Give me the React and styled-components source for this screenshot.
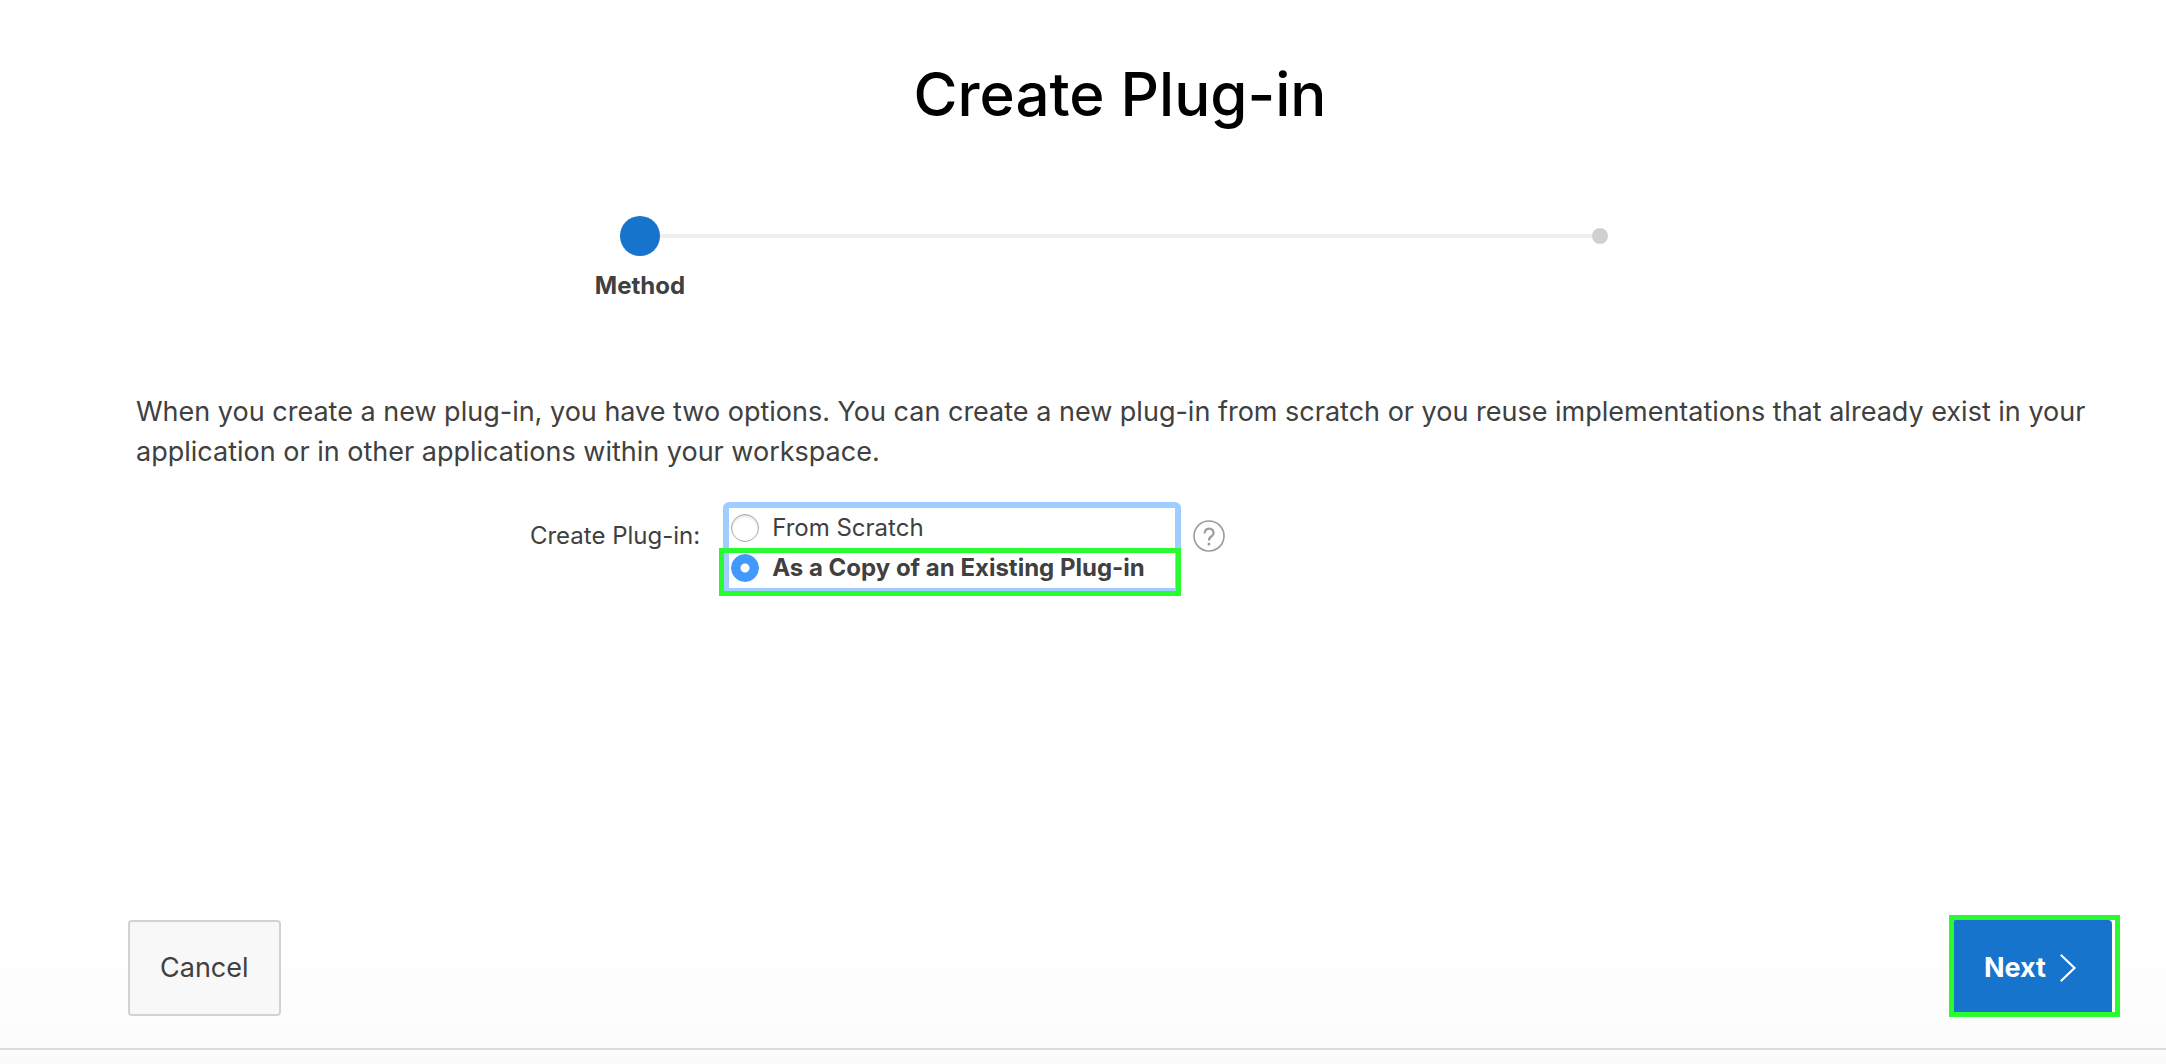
import React, { useState } from 'react';
import styled, { createGlobalStyle } from 'styled-components';

const GlobalStyle = createGlobalStyle`
  *, *::before, *::after { box-sizing: border-box; }
  body {
    margin: 0;
    background: #fff;
    color: #404040;
    font-family: Inter, "Liberation Sans", sans-serif;
    font-size: 24px;
    line-height: 32px;
  }
  button, input { font: inherit; color: inherit; }
`;

const Page = styled.div`
  display: flex;
  flex-direction: column;
  min-height: 100vh;
`;

const Main = styled.main`
  flex: 1;
  padding: 54px 54px 0 128px;
`;

const Title = styled.h1`
  margin: 0 0 82px;
  text-align: center;
  color: #000;
  font-size: 60px;
  font-weight: 500;
  line-height: 80px;
`;

const Steps = styled.ol`
  display: grid;
  grid-template-columns: 1fr 1fr;
  max-width: 1920px;
  margin: 0 auto 90px;
  padding: 0;
  list-style: none;
`;

const Step = styled.li`
  display: flex;
  flex-direction: column;
  align-items: center;
  gap: 14px;
  font-weight: 700;
`;

const Track = styled.div`
  display: flex;
  align-items: center;
  width: 100%;
  height: 40px;
`;

const Line = styled.span`
  flex: 1;
  height: 4px;
  background: ${(p) => (p.$on ? '#efefef' : 'transparent')};
`;

const Dot = styled.span`
  width: ${(p) => (p.$active ? 40 : 16)}px;
  height: ${(p) => (p.$active ? 40 : 16)}px;
  border-radius: 50%;
  background: ${(p) => (p.$active ? '#1674cd' : '#d0d0d0')};
`;

const Intro = styled.p`
  margin: 0 0 30px;
  padding: 0 8px;
  font-size: 27px;
  line-height: 40px;
`;

const Field = styled.div`
  display: grid;
  grid-template-columns: 30% auto auto 1fr;
  align-items: start;
`;

const FieldLabel = styled.span`
  padding: 18px 23px 0 0;
  text-align: right;
`;

const Options = styled.div`
  width: 458px;
  border: 6px solid #9fcdff;
  border-radius: 6px;
`;

const Option = styled.label`
  position: relative;
  display: flex;
  align-items: center;
  gap: 13px;
  height: 40px;
  padding-left: 2px;
  font-weight: ${(p) => (p.$marked ? 700 : 400)};
  white-space: nowrap;

  &::after {
    content: ${(p) => (p.$marked ? '""' : 'none')};
    position: absolute;
    inset: 0 -6px -8px -10px;
    border: 5px solid #28fb2f;
    pointer-events: none;
  }
`;

const Radio = styled.input`
  appearance: none;
  flex: none;
  width: 28px;
  height: 28px;
  margin: 0;
  border: 1px solid #a8a8a8;
  border-radius: 50%;
  background: #fff;
  box-shadow: inset 0 2px 2px #e4e4e4;
  outline: none;

  &:checked {
    border-color: #4099fb;
    background: radial-gradient(circle, #fff 0 3px, #fff 4px, #4099fb 5px);
    box-shadow: none;
  }
`;

const Help = styled.button`
  display: flex;
  margin: 18px 0 0 12px;
  padding: 0;
  border: 0;
  background: none;
  color: #9b9b9b;
`;

const Footer = styled.footer`
  display: flex;
  align-items: flex-start;
  justify-content: space-between;
  padding: 0 54px 32px 128px;
  border-bottom: 2px solid #dcdcdc;
  background: linear-gradient(#fff, #fcfcfc);
`;

const Strip = styled.div`
  height: 14px;
  background: #fbfbfb;
`;

const Button = styled.button`
  position: relative;
  display: flex;
  align-items: center;
  gap: 14px;
  height: 96px;
  padding: 0 30px;
  border: 2px solid ${(p) => (p.$primary ? '#1674cd' : '#d2d2d2')};
  border-radius: 4px;
  background: ${(p) => (p.$primary ? '#1674cd' : '#f8f8f8')};
  color: ${(p) => (p.$primary ? '#fff' : '#404040')};
  font-size: 27px;
  font-weight: ${(p) => (p.$primary ? 700 : 400)};

  &::after {
    content: ${(p) => (p.$primary ? '""' : 'none')};
    position: absolute;
    inset: -7px -10px -3px -5px;
    border: 5px solid #28fb2f;
  }
`;

const choices = [
  { value: 'scratch', text: 'From Scratch' },
  { value: 'copy', text: 'As a Copy of an Existing Plug-in' },
];

export default function App() {
  const [method, setMethod] = useState('copy');

  return (
    <Page>
      <GlobalStyle />
      <Main>
        <Title>Create Plug-in</Title>
        <Steps>
          <Step aria-current="step">
            <Track><Line /><Dot $active /><Line $on /></Track>
            Method
          </Step>
          <Step>
            <Track><Line $on /><Dot /><Line /></Track>
          </Step>
        </Steps>
        <Intro>
          When you create a new plug-in, you have two options. You can create a new plug-in from
          scratch or you reuse implementations that already exist in your application or in other
          applications within your workspace.
        </Intro>
        <Field>
          <FieldLabel id="method-label">Create Plug-in:</FieldLabel>
          <Options role="radiogroup" aria-labelledby="method-label">
            {choices.map((c) => (
              <Option key={c.value} $marked={method === c.value}>
                <Radio
                  type="radio"
                  name="method"
                  value={c.value}
                  checked={method === c.value}
                  onChange={() => setMethod(c.value)}
                />
                {c.text}
              </Option>
            ))}
          </Options>
          <Help type="button" aria-label="Help">
            <svg width="32" height="32" viewBox="0 0 32 32" fill="none" stroke="currentColor">
              <circle cx="16" cy="16" r="15" strokeWidth="1.6" />
              <path d="M11.6 13.400V13A4.500 4.200 0 1 1 18.600 16.300C17 17.300 16 18 16 20.500" strokeWidth="2.200" />
              <circle cx="16" cy="24" r="1.500" fill="currentColor" stroke="none" />
            </svg>
          </Help>
        </Field>
      </Main>
      <Footer>
        <Button type="button">Cancel</Button>
        <Button type="button" $primary>
          Next
          <svg width="20" height="28" viewBox="0 0 20 28" fill="none" stroke="currentColor" strokeWidth="2.200" strokeLinecap="round">
            <path d="M1.500 1.500L14.500 14L1.500 26.500" />
          </svg>
        </Button>
      </Footer>
      <Strip />
    </Page>
  );
}
